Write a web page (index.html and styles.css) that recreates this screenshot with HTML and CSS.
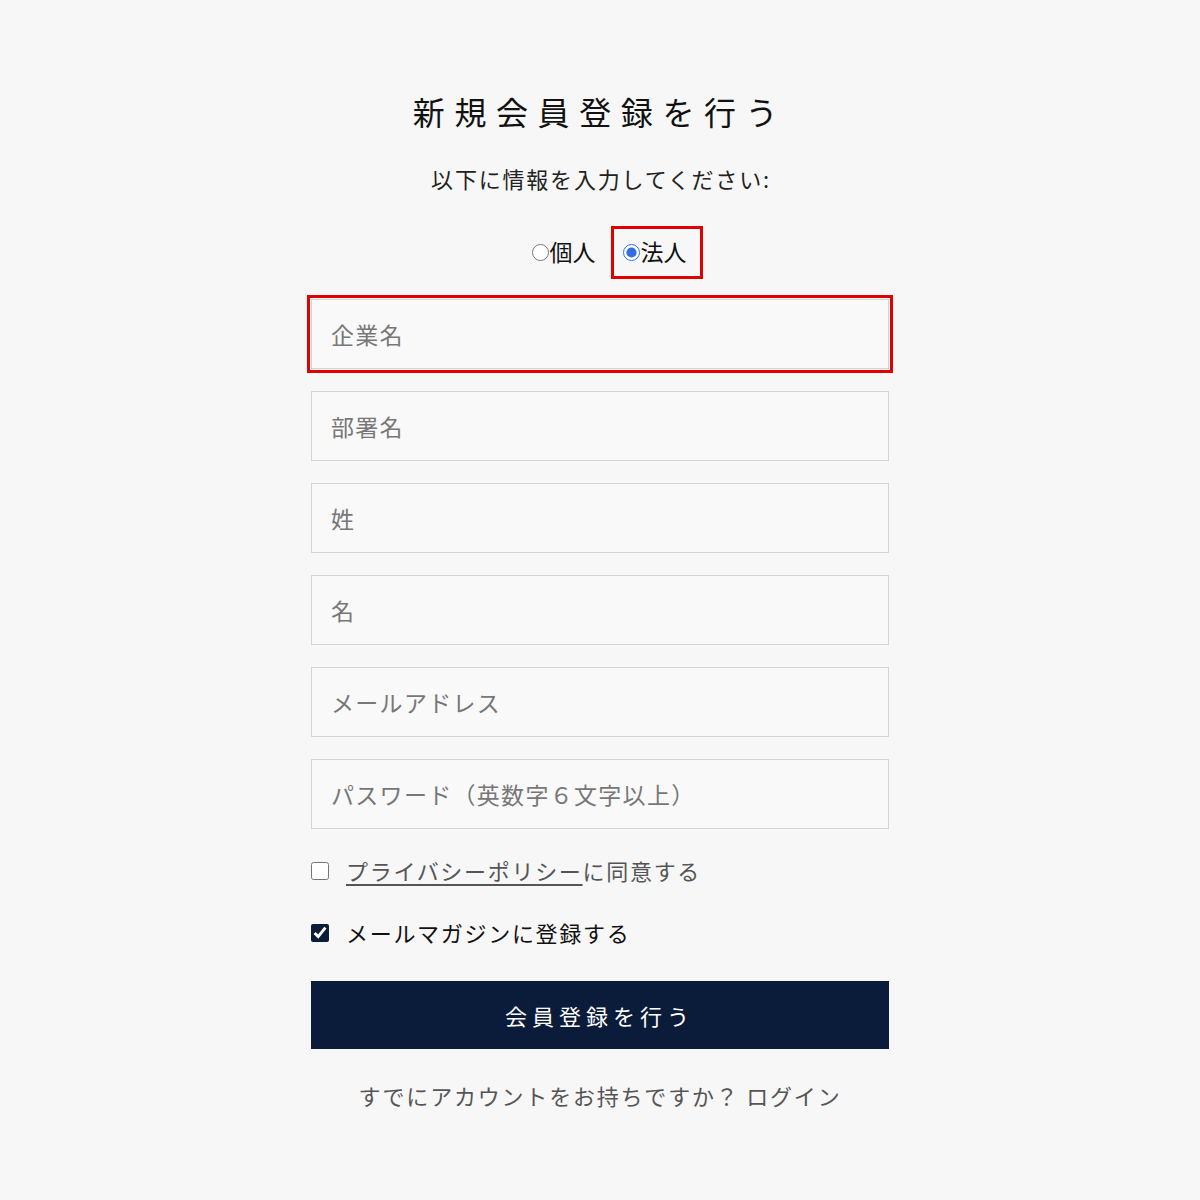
FILE: index.html
```html
<!DOCTYPE html>
<html lang="ja">
<head>
<meta charset="utf-8">
<title>新規会員登録を行う</title>
<link rel="stylesheet" href="styles.css">
</head>
<body>
<main class="page">
  <h1 class="title">新規会員登録を行う</h1>
  <p class="subtitle">以下に情報を入力してください:</p>
  <div class="type-row">
    <label class="type-option"><input type="radio" name="type" class="radio">個人</label>
    <label class="type-option selected"><input type="radio" name="type" class="radio" checked>法人</label>
  </div>
  <form class="fields">
    <input class="field highlighted" type="text" placeholder="企業名">
    <input class="field" type="text" placeholder="部署名">
    <input class="field" type="text" placeholder="姓">
    <input class="field" type="text" placeholder="名">
    <input class="field" type="email" placeholder="メールアドレス">
    <input class="field" type="password" placeholder="パスワード（英数字６文字以上）">
    <label class="check-row muted"><input type="checkbox" class="check"><span><a class="link" href="#">プライバシーポリシー</a>に同意する</span></label>
    <label class="check-row dark"><input type="checkbox" class="check" checked><span>メールマガジンに登録する</span></label>
    <button type="button" class="submit">会員登録を行う</button>
  </form>
  <p class="login">すでにアカウントをお持ちですか？ ログイン</p>
</main>
</body>
</html>
```

FILE: styles.css
```css
* { box-sizing: border-box; }
html, body {
  margin: 0;
  background: #f7f7f7;
}
body {
  font-family: "Noto Sans CJK JP", "Noto Sans", sans-serif;
  color: #111;
}
.page {
  width: 578px;
  margin: 0 auto;
  padding-top: 91px;
}
.title {
  margin: 0;
  font-size: 32px;
  line-height: 40px;
  font-weight: 400;
  letter-spacing: 0.3em;
  text-align: center;
  color: #111;
}
.subtitle {
  margin: 31px 0 0;
  font-size: 22px;
  line-height: 32px;
  text-align: center;
  color: #222;
  letter-spacing: 1.8px;
  padding-left: 2px;
}
.type-row {
  margin-top: 32px;
  display: flex;
  justify-content: center;
  align-items: center;
  gap: 15px;
  padding-left: 34px;
  height: 53px;
}
.type-option {
  display: flex;
  align-items: center;
  font-size: 23px;
  line-height: 30px;
  color: #111;
  padding-bottom: 3px;
}
.type-option.selected {
  height: 53px;
  border: 3px solid #e00000;
  padding: 0 13px 3px 9px;
}
.radio {
  width: 17px;
  height: 17px;
  margin: 2px 1px 0 0;
  accent-color: #2f6fe4;
}
.fields {
  margin-top: 20px;
  display: flex;
  flex-direction: column;
  gap: 22px;
}
.field {
  display: block;
  width: 100%;
  height: 70px;
  border: 1px solid #d4d4d4;
  background: #f9f9f9;
  padding: 0 19px;
  font-family: inherit;
  font-size: 23px;
  letter-spacing: 1.3px;
  color: #333;
  outline: none;
}
.field::placeholder {
  color: #777;
}
.field.highlighted {
  outline: 3px solid #e00000;
  outline-offset: 1px;
}
.check-row {
  display: flex;
  align-items: center;
  gap: 17px;
  font-size: 22px;
  line-height: 32px;
  letter-spacing: 1.7px;
}
.check-row.muted {
  margin-top: 3px;
  color: #555;
}
.check-row.dark {
  margin-top: 8px;
  color: #111;
}
.check {
  width: 18px;
  height: 18px;
  margin: 2px 0 0;
  accent-color: #0b1c3a;
}
.link {
  color: #555;
  text-decoration: underline;
  text-underline-offset: 4px;
}
.submit {
  margin-top: 11px;
  height: 68px;
  width: 100%;
  border: 0;
  background: #0b1c3a;
  color: #fff;
  font-family: inherit;
  font-size: 22px;
  letter-spacing: 5px;
  padding-left: 5px;
}
.login {
  margin: 30px 0 0;
  font-size: 22px;
  line-height: 32px;
  text-align: center;
  color: #555;
  letter-spacing: 1.8px;
}
```
